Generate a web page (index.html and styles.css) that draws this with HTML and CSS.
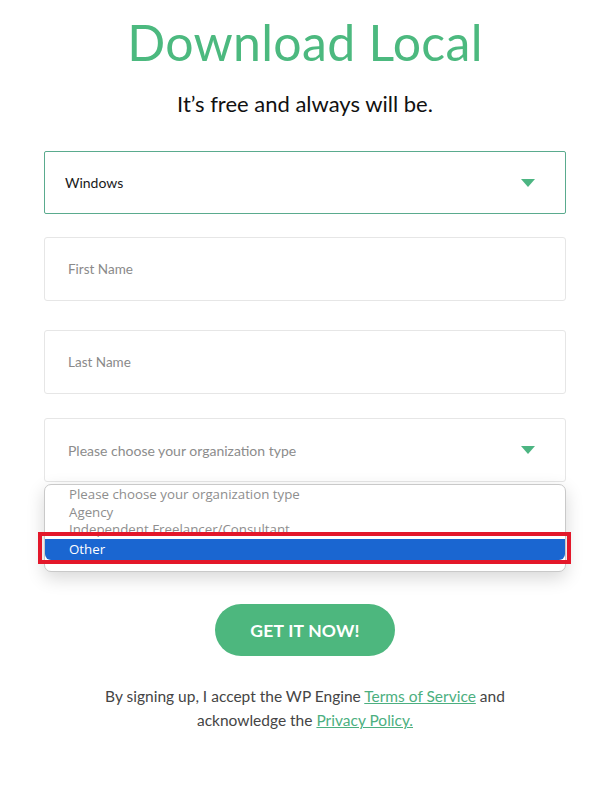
FILE: index.html
```html
<!DOCTYPE html>
<html lang="en">
<head>
<meta charset="utf-8">
<title>Download Local</title>
<link rel="stylesheet" href="styles.css">
</head>
<body>
<main class="page">
  <h1 class="title">Download Local</h1>
  <p class="subtitle">It’s free and always will be.</p>
  <form class="form">
    <div class="field select active">
      <span class="value">Windows</span>
      <svg class="caret" width="14" height="8" viewBox="0 0 14 8"><path d="M0 0H14L7 8Z" fill="#4cb582"/></svg>
    </div>
    <div class="field input first"><span class="placeholder">First Name</span></div>
    <div class="field input last"><span class="placeholder">Last Name</span></div>
    <div class="org-wrap">
      <div class="field select org">
        <span class="placeholder">Please choose your organization type</span>
        <svg class="caret" width="14" height="8" viewBox="0 0 14 8"><path d="M0 0H14L7 8Z" fill="#4cb582"/></svg>
      </div>
      <ul class="listbox">
        <li>Please choose your organization type</li>
        <li>Agency</li>
        <li>Independent Freelancer/Consultant</li>
        <li class="selected">Other</li>
      </ul>
      <div class="highlight-box"></div>
    </div>
    <div class="actions">
      <button type="button" class="cta">GET IT NOW!</button>
    </div>
  </form>
  <p class="legal">By signing up, I accept the WP Engine <a href="#">Terms of Service</a> and<br>acknowledge the <a href="#">Privacy Policy.</a></p>
</main>
</body>
</html>
```
FILE: styles.css
```css
* { box-sizing: border-box; }
html, body { margin: 0; padding: 0; background: #fff; }
body { font-family: Lato, "Open Sans", sans-serif; }

.page {
  width: 522px;
  margin: 0 auto 0 44px;
}

.title {
  margin: 18px 0 0;
  font-family: Lato, sans-serif;
  font-weight: 400;
  font-size: 50px;
  line-height: 48px;
  color: #4cb97f;
  text-align: center;
  letter-spacing: 0.3px;
}

.subtitle {
  margin: 26px 0 0;
  font-size: 22px;
  line-height: 24px;
  color: #111;
  text-align: center;
}

.form { margin-top: 35px; display: flex; flex-direction: column; }

.field {
  height: 64px;
  border: 1px solid #e6e6e6;
  border-radius: 3px;
  display: flex;
  align-items: center;
  padding: 0 30px 0 23px;
  background: #fff;
}
.field.select { justify-content: space-between; }
.field.active {
  height: 63px;
  border-color: #5aab8e;
  border-radius: 2px;
  padding-left: 20px;
}
.value { font-size: 14px; color: #1a1a1a; }
.placeholder { font-size: 13.5px; color: #8a8a8a; }
.caret { display: block; }

.input.first { margin-top: 23px; }
.input.last { margin-top: 29px; }

.org-wrap { position: relative; margin-top: 24px; }
.org .placeholder { font-size: 14px; color: #8c8c8c; }

.listbox {
  position: absolute;
  left: 0;
  top: 66px;
  width: 522px;
  height: 88px;
  margin: 0;
  padding: 1px 0 0;
  list-style: none;
  background: #fff;
  border: 1px solid #c9c9c9;
  border-radius: 7px;
  box-shadow: 0 6px 18px rgba(0, 0, 0, 0.16);
  font-family: "Open Sans", "Noto Sans", sans-serif;
  font-size: 13.3px;
  line-height: 17.5px;
  color: #8e8e8e;
  overflow: hidden;
}
.listbox li { padding-left: 24px; height: 17.5px; }
.listbox li.selected {
  background: #1a66d1;
  color: #fff;
  height: 21px;
  line-height: 20px;
  border-radius: 0 0 6px 6px;
}

.highlight-box {
  position: absolute;
  left: -6px;
  top: 114px;
  width: 533px;
  height: 32px;
  border: 4px solid #e3172a;
  pointer-events: none;
}

.actions {
  display: flex;
  justify-content: center;
  margin-top: 122px;
}
.cta {
  width: 180px;
  height: 52px;
  border: 0;
  border-radius: 26px;
  background: #4db77e;
  color: #fff;
  font-family: Lato, sans-serif;
  font-weight: 700;
  font-size: 17.5px;
  letter-spacing: 0.2px;
  cursor: pointer;
}

.legal {
  margin: 28px 0 0;
  text-align: center;
  font-size: 15.5px;
  line-height: 24px;
  color: #454545;
}
.legal a { color: #4caf80; text-decoration: underline; }
```
